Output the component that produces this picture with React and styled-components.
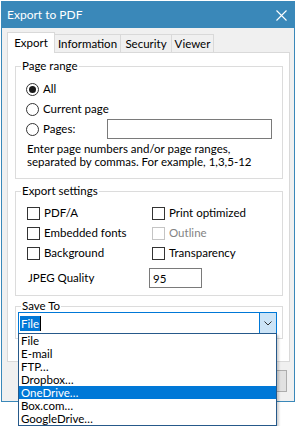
import React from 'react';
import styled, { createGlobalStyle } from 'styled-components';

const FONT = `Lato, "Noto Sans", "Liberation Sans", sans-serif`;
const SIZE = '11.5px';

const GlobalStyle = createGlobalStyle`
  *, *::before, *::after { box-sizing: border-box; }
  html, body { margin: 0; padding: 0; background: #ffffff; }
  body { font-family: ${FONT}; font-size: ${SIZE}; color: #000; }
`;

const Screen = styled.div`
  min-height: 426px;
  padding-top: 1px;
  background: #ffffff;
`;

const Window = styled.div`
  position: relative;
  width: 294px;
  margin-left: 1px;
  border: 1px solid #3a88b9;
  background: #f0f0f0;
`;

const TitleBar = styled.div`
  display: flex;
  align-items: center;
  height: 26px;
  background: #3a88b9;
  color: #ffffff;
`;

const Title = styled.div`
  flex: 1;
  padding-left: 5px;
  font-size: 12px;
  line-height: 16px;
`;

const CloseButton = styled.div`
  width: 26px;
  height: 26px;
  display: flex;
  align-items: center;
  justify-content: center;
`;

const Body = styled.div`
  padding: 4px 4px 9px 5px;
`;

const TabStrip = styled.div`
  position: relative;
  z-index: 1;
  display: flex;
  align-items: flex-end;
  height: 20px;
`;

const Tab = styled.div`
  position: relative;
  z-index: ${(p) => (p.$active ? 2 : 1)};
  width: ${(p) => p.$w}px;
  height: ${(p) => (p.$active ? 21 : 18)}px;
  margin-bottom: ${(p) => (p.$active ? -1 : 0)}px;
  margin-left: ${(p) => (p.$first ? 0 : -1)}px;
  display: flex;
  align-items: center;
  justify-content: center;
  border: 1px solid #d9d9d9;
  border-bottom: none;
  background: ${(p) => (p.$active ? '#ffffff' : '#f0f0f0')};
  line-height: 14px;
  padding-top: ${(p) => (p.$active ? 0 : 1)}px;
  white-space: nowrap;
`;

const TabPanel = styled.div`
  background: #ffffff;
  border: 1px solid #d9d9d9;
  padding: 6px 6px 22px 7px;
`;

const Group = styled.fieldset`
  margin: ${(p) => p.$mt}px 0 0;
  padding: ${(p) => p.$pt}px 4px ${(p) => p.$pb}px 2px;
  border: 1px solid #dcdcdc;
  min-width: 0;
`;

const Legend = styled.legend`
  margin-left: 3px;
  padding: 0 1px;
  font-size: ${SIZE};
  line-height: 14px;
`;

const RadioRow = styled.div`
  display: flex;
  align-items: center;
  height: 20px;
  padding-left: 8px;
`;

const RadioCircle = styled.span`
  width: 13px;
  height: 13px;
  flex: none;
  border: 1px solid #333333;
  border-radius: 50%;
  background: #ffffff;
  display: flex;
  align-items: center;
  justify-content: center;
  &::after {
    content: '';
    display: ${(p) => (p.$checked ? 'block' : 'none')};
    width: 7px;
    height: 7px;
    border-radius: 50%;
    background: #1a1a1a;
  }
`;

const OptionLabel = styled.span`
  margin-left: 4px;
  line-height: 14px;
  width: ${(p) => (p.$w ? `${p.$w}px` : 'auto')};
  flex: none;
  white-space: nowrap;
  color: ${(p) => (p.$disabled ? '#838383' : '#000000')};
`;

const TextBox = styled.input`
  width: ${(p) => p.$w}px;
  height: 20px;
  flex: none;
  margin: 0;
  border: 1px solid #7a7a7a;
  border-radius: 0;
  background: #ffffff;
  padding: 0 3px;
  font-family: ${FONT};
  font-size: ${SIZE};
  color: #000000;
  outline: none;
`;

const HelpText = styled.div`
  margin-top: 3px;
  padding-left: 9px;
  line-height: 13px;
`;

const CheckGrid = styled.div`
  display: grid;
  grid-template-columns: 125px 125px;
  grid-auto-rows: 20px;
  padding-left: 9px;
`;

const CheckItem = styled.div`
  display: flex;
  align-items: center;
`;

const CheckBox = styled.span`
  width: 13px;
  height: 13px;
  flex: none;
  border: 1px solid ${(p) => (p.$disabled ? '#c4c4c4' : '#333333')};
  background: #ffffff;
`;

const FieldRow = styled.div`
  display: flex;
  align-items: center;
  height: 20px;
  margin-top: 5px;
  padding-left: 10px;
`;

const FieldLabel = styled.span`
  width: 121px;
  flex: none;
  line-height: 14px;
`;

const ComboBox = styled.div`
  position: relative;
  display: flex;
  width: 259px;
  height: 22px;
  margin-top: -1px;
  border: 1px solid #0078d7;
  background: #ffffff;
`;

const ComboText = styled.div`
  flex: 1;
  display: flex;
  align-items: center;
  padding-left: 1px;
`;

const Selection = styled.span`
  background: #0078d7;
  color: #ffffff;
  line-height: 15px;
  padding: 0 1px;
`;

const Caret = styled.span`
  width: 1px;
  height: 15px;
  background: #000000;
`;

const DropButton = styled.div`
  width: 17px;
  flex: none;
  display: flex;
  align-items: center;
  justify-content: center;
  background: #cce4f7;
  border-left: 1px solid #0078d7;
`;

const DropList = styled.div`
  position: absolute;
  z-index: 5;
  top: 100%;
  left: -1px;
  width: 259px;
  border: 1px solid #26598a;
  background: #ffffff;
  box-shadow: 2px 2px 2px rgba(0, 0, 0, 0.18);
`;

const ListItem = styled.div`
  height: 13px;
  line-height: 13px;
  padding-left: 2px;
  background: ${(p) => (p.$selected ? '#0078d7' : '#ffffff')};
  color: ${(p) => (p.$selected ? '#ffffff' : '#000000')};
  white-space: nowrap;
`;

const ButtonRow = styled.div`
  display: flex;
  justify-content: flex-end;
  gap: 6px;
  margin-top: 8px;
  padding-right: 3px;
`;

const Button = styled.div`
  width: 75px;
  height: 22px;
  display: flex;
  align-items: center;
  justify-content: center;
  border: 1px solid #adadad;
  background: #e1e1e1;
`;

const tabs = [
  { label: 'Export', w: 48, active: true },
  { label: 'Information', w: 67 },
  { label: 'Security', w: 52 },
  { label: 'Viewer', w: 43 },
];

const checks = [
  { label: 'PDF/A' },
  { label: 'Print optimized' },
  { label: 'Embedded fonts' },
  { label: 'Outline', disabled: true },
  { label: 'Background' },
  { label: 'Transparency' },
];

const destinations = ['File', 'E-mail', 'FTP…', 'Dropbox…', 'OneDrive…', 'Box.com…', 'GoogleDrive…'];

export default function App() {
  return (
    <Screen>
      <GlobalStyle />
      <Window>
        <TitleBar>
          <Title>Export to PDF</Title>
          <CloseButton>
            <svg width="11" height="11" viewBox="0 0 11 11">
              <path d="M0.5 0.5 L10.5 10.5 M10.5 0.5 L0.5 10.5" stroke="#ffffff" strokeWidth="1.1" fill="none" />
            </svg>
          </CloseButton>
        </TitleBar>
        <Body>
          <TabStrip>
            {tabs.map((t, i) => (
              <Tab key={t.label} $w={t.w} $active={t.active} $first={i === 0}>
                {t.label}
              </Tab>
            ))}
          </TabStrip>
          <TabPanel>
            <Group $mt={0} $pt={6} $pb={10}>
              <Legend>Page range</Legend>
              <RadioRow>
                <RadioCircle $checked />
                <OptionLabel>All</OptionLabel>
              </RadioRow>
              <RadioRow>
                <RadioCircle />
                <OptionLabel>Current page</OptionLabel>
              </RadioRow>
              <RadioRow>
                <RadioCircle />
                <OptionLabel $w={64}>Pages:</OptionLabel>
                <TextBox $w={165} readOnly defaultValue="" />
              </RadioRow>
              <HelpText>
                Enter page numbers and/or page ranges,
                <br />
                separated by commas. For example, 1,3,5-12
              </HelpText>
            </Group>

            <Group $mt={5} $pt={5} $pb={7}>
              <Legend>Export settings</Legend>
              <CheckGrid>
                {checks.map((c) => (
                  <CheckItem key={c.label}>
                    <CheckBox $disabled={c.disabled} />
                    <OptionLabel $disabled={c.disabled}>{c.label}</OptionLabel>
                  </CheckItem>
                ))}
              </CheckGrid>
              <FieldRow>
                <FieldLabel>JPEG Quality</FieldLabel>
                <TextBox $w={53} readOnly defaultValue="95" />
              </FieldRow>
            </Group>

            <Group $mt={3} $pt={0} $pb={4}>
              <Legend>Save To</Legend>
              <ComboBox>
                <ComboText>
                  <Selection>File</Selection>
                  <Caret />
                </ComboText>
                <DropButton>
                  <svg width="8" height="5" viewBox="0 0 8 5">
                    <polyline points="0.5,0.5 4,4 7.5,0.5" fill="none" stroke="#333333" strokeWidth="1" />
                  </svg>
                </DropButton>
                <DropList>
                  {destinations.map((d) => (
                    <ListItem key={d} $selected={d === 'OneDrive…'}>
                      {d}
                    </ListItem>
                  ))}
                </DropList>
              </ComboBox>
            </Group>
          </TabPanel>
          <ButtonRow>
            <Button>OK</Button>
            <Button>Cancel</Button>
          </ButtonRow>
        </Body>
      </Window>
    </Screen>
  );
}
